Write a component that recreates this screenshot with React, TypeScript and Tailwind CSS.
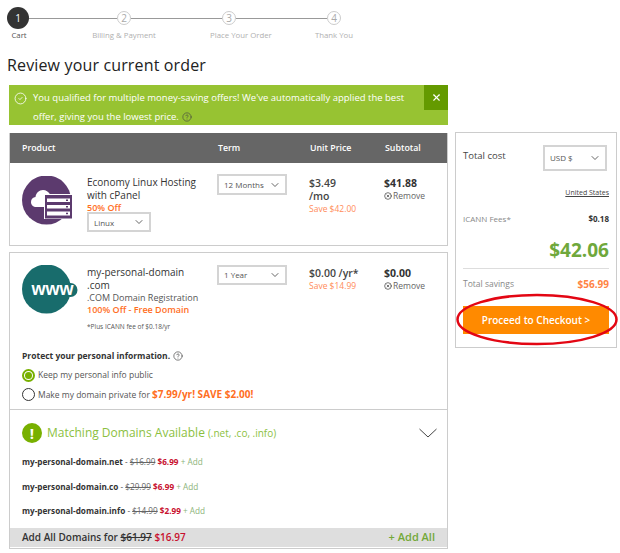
import React from "react";
import { CircleCheck, CircleHelp, ChevronDown, X, CircleX } from "lucide-react";

function Step({ n, active }: { n: string; active?: boolean }) {
  return active ? (
    <div className="w-[22px] h-[22px] rounded-full bg-[#333333] text-white text-[10px] flex items-center justify-center shrink-0">{n}</div>
  ) : (
    <div className="w-[14px] h-[14px] rounded-full border border-[#cccccc] bg-white text-[#aaaaaa] text-[10px] flex items-center justify-center shrink-0">{n}</div>
  );
}

function Line({ w }: { w: string }) {
  return <div className={`h-px bg-[#999999] ${w}`} />;
}

function Select({ label, w, h, cls }: { label: string; w: string; h: string; cls?: string }) {
  return (
    <div className={`border-2 border-[#d4d4d4] bg-white flex items-center justify-between pl-[5px] pr-[4px] text-[8px] text-[#555555] ${w} ${h} ${cls ?? ""}`}>
      <span>{label}</span>
      <ChevronDown size={12} strokeWidth={1.5} className="text-[#333333]" />
    </div>
  );
}

function Remove() {
  return (
    <div className="flex items-center text-[8.500px] text-[#666666] leading-[11px]">
      <CircleX size={8} strokeWidth={2} className="text-[#333333] mr-[1px]" />
      <span>Remove</span>
    </div>
  );
}

function HostingIcon() {
  return (
    <svg width="51" height="49" viewBox="0 0 51 49" className="shrink-0">
      <circle cx="24.500" cy="24" r="24.500" fill="#5c3a6e" />
      <path d="M14 31c-3 0-5-2.300-5-5s2-4.800 4.500-5c0.500-4 3.500-7 7.500-7 3 0 5.500 1.700 6.800 4 3.700 0 6.200 2.500 6.200 5v8z" fill="#ffffff" />
      <rect x="22" y="18" width="28.500" height="25" fill="#ffffff" />
      <rect x="23" y="19" width="27" height="23.500" fill="#5c3a6e" />
      <g fill="#ffffff">
        <rect x="25" y="22.500" width="23" height="3.500" />
        <rect x="25" y="29" width="23" height="3.500" />
        <rect x="25" y="35.500" width="23" height="4" />
      </g>
      <g fill="#5c3a6e">
        <rect x="44" y="23.500" width="2" height="1.500" />
        <rect x="44" y="30" width="2" height="1.500" />
        <rect x="44" y="36.700" width="2" height="1.500" />
      </g>
    </svg>
  );
}

function WwwIcon() {
  return (
    <svg width="56" height="49" viewBox="0 0 56 49" className="shrink-0">
      <circle cx="24.500" cy="24" r="24.500" fill="#186c6c" />
      <circle cx="48.500" cy="25" r="7" fill="#186c6c" />
      <text x="9.500" y="30" fontFamily="'Liberation Sans', sans-serif" fontWeight="700" fontSize="18" fill="#ffffff">www</text>
    </svg>
  );
}

function DomainRow({ name, old, price }: { name: string; old: string; price: string }) {
  return (
    <div className="text-[8.200px] leading-[12px] text-[#555555] h-[24.500px] whitespace-nowrap">
      <span className="font-bold text-[#333333]">{name}</span>
      <span> - </span>
      <span className="line-through text-[#666666]">{old}</span>{" "}
      <span className="font-bold text-[#c8102e]">{price}</span>{" "}
      <span className="text-[#8cb37a]">+ Add</span>
    </div>
  );
}

export default function App() {
  return (
    <div className="relative w-[620px] h-[553px] overflow-hidden bg-white text-[#333333] font-['Open_Sans',sans-serif]">
      {/* stepper */}
      <div className="pl-[7px] pt-[7px] flex items-center h-[29px] box-border">
        <Step n="1" active />
        <Line w="w-[88px]" />
        <Step n="2" />
        <Line w="w-[91px]" />
        <Step n="3" />
        <Line w="w-[91px]" />
        <Step n="4" />
      </div>
      <div className="flex text-[7.800px] leading-[11px] h-[11px] mt-px text-[#b0b0b0] text-center whitespace-nowrap">
        <div className="w-[38px] text-[#555555]">Cart</div>
        <div className="w-[172px]">Billing &amp; Payment</div>
        <div className="w-[38px]">Place Your Order</div>
        <div className="w-[172px]">Thank You</div>
      </div>

      <h1 className="pl-[7px] mt-[13px] text-[16px] leading-[22px] tracking-[0.15px] text-[#222222] font-normal">Review your current order</h1>

      <div className="flex items-start gap-[7px] pl-[9px] mt-[9px]">
        {/* left column */}
        <div className="w-[439px]">
          <div className="relative h-[40px] bg-[#97c332] text-white text-[9.500px] leading-[19px] pl-[24px] pt-[3px] pr-[30px]">
            <CircleCheck size={13} strokeWidth={1.5} className="absolute left-[5px] top-[7px]" />
            <div>You qualified for multiple money-saving offers! We've automatically applied the best</div>
            <div className="flex items-center gap-[3px]">
              <span>offer, giving you the lowest price.</span>
              <CircleHelp size={10} strokeWidth={1.500} className="text-[#444444]" />
            </div>
            <div className="absolute right-0 top-0 w-[24px] h-[25px] bg-[#649a00] flex items-center justify-center">
              <X size={11} strokeWidth={2.500} />
            </div>
          </div>

          {/* product card */}
          <div className="mt-[8px] border border-[#cccccc] border-t-0 h-[113px]">
            <div className="h-[30px] bg-[#666666] text-white text-[8.800px] font-semibold flex items-center pt-px">
              <div className="w-[208px] pl-[12px] shrink-0">Product</div>
              <div className="w-[92px] shrink-0">Term</div>
              <div className="w-[75px] shrink-0">Unit Price</div>
              <div>Subtotal</div>
            </div>
            <div className="flex pl-[12px]">
              <div className="w-[65px] pt-[13px] shrink-0"><HostingIcon /></div>
              <div className="w-[130px] shrink-0 pt-[13px] text-[10px] leading-[13px]">
                <div>Economy Linux Hosting</div>
                <div>with cPanel</div>
                <div className="text-[9px] leading-[11px] font-semibold text-[#ff6f1f]">50% Off</div>
                <Select label="Linux" w="w-[64px]" h="h-[20px]" cls="-mt-px" />
              </div>
              <div className="w-[92px] shrink-0 pt-[11px]">
                <Select label="12 Months" w="w-[70px]" h="h-[21px]" />
              </div>
              <div className="w-[75px] shrink-0 pt-[14px]">
                <div className="text-[10.500px] leading-[13px] font-semibold text-[#444444]">$3.49<br />/mo</div>
                <div className="text-[8.500px] leading-[11px] text-[#ff8c5a]">Save $42.00</div>
              </div>
              <div className="pt-[14px]">
                <div className="text-[10.500px] leading-[13px] font-bold">$41.88</div>
                <Remove />
              </div>
            </div>
          </div>

          {/* domain card */}
          <div className="mt-[6px] border border-[#cccccc] h-[297px]">
            <div className="flex pl-[12px] h-[97px]">
              <div className="w-[65px] pt-[12px] shrink-0"><WwwIcon /></div>
              <div className="w-[130px] shrink-0 pt-[13px]">
                <div className="text-[10px] leading-[13px]">my-personal-domain<br />.com</div>
                <div className="text-[9px] leading-[12px] text-[#555555]">.COM Domain Registration</div>
                <div className="text-[9px] leading-[11px] font-semibold text-[#ff6f1f]">100% Off - Free Domain</div>
                <div className="text-[6.500px] leading-[9px] mt-[7px] text-[#555555]">*Plus ICANN fee of $0.18/yr</div>
              </div>
              <div className="w-[92px] shrink-0 pt-[12px]">
                <Select label="1 Year" w="w-[70px]" h="h-[20px]" />
              </div>
              <div className="w-[75px] shrink-0 pt-[14px]">
                <div className="text-[10.500px] leading-[13px] font-semibold text-[#444444]">$0.00 /yr*</div>
                <div className="text-[8.500px] leading-[11px] text-[#ff8c5a]">Save $14.99</div>
              </div>
              <div className="pt-[14px]">
                <div className="text-[10.500px] leading-[13px] font-bold">$0.00</div>
                <Remove />
              </div>
            </div>

            <div className="pl-[12px] h-[60px] border-b border-[#cccccc]">
              <div className="flex items-center gap-[3px] text-[8.500px] leading-[12px] font-bold">
                <span>Protect your personal information.</span>
                <CircleHelp size={10} strokeWidth={1.500} className="font-normal" />
              </div>
              <div className="flex items-center gap-[3px] mt-[6px] h-[15px] text-[8.500px] text-[#555555]">
                <span className="w-[13px] h-[13px] rounded-full border-2 border-[#78b000] flex items-center justify-center shrink-0">
                  <span className="w-[7px] h-[7px] rounded-full bg-[#78b000]" />
                </span>
                Keep my personal info public
              </div>
              <div className="flex items-center gap-[3px] mt-[4px] h-[15px] text-[8.500px] text-[#555555]">
                <span className="w-[13px] h-[13px] rounded-full border-[1.500px] border-[#333333] shrink-0" />
                <span>Make my domain private for <span className="text-[10px] font-bold text-[#ff6f1f]">$7.99/yr! SAVE $2.00!</span></span>
              </div>
            </div>

            <div className="pl-[12px] pr-[10px] pt-[13px] flex items-center justify-between">
              <div className="flex items-center gap-[5px] text-[#8cbf3f]">
                <span className="w-[20px] h-[20px] rounded-full bg-[#78b000] text-white font-bold text-[15px] flex items-center justify-center">!</span>
                <span className="text-[12px] leading-[20px]">Matching Domains Available</span>
                <span className="text-[10px] leading-[20px] -ml-[2px]">(.net, .co, .info)</span>
              </div>
              <svg width="18" height="10" viewBox="0 0 18 10" fill="none" stroke="#444444" strokeWidth="1"><path d="M0.500 1L9 9L17.500 1" /></svg>
            </div>

            <div className="pl-[12px] mt-[13px] h-[72px]">
              <DomainRow name="my-personal-domain.net" old="$16.99" price="$6.99" />
              <DomainRow name="my-personal-domain.co" old="$29.99" price="$6.99" />
              <DomainRow name="my-personal-domain.info" old="$14.99" price="$2.99" />
            </div>

            <div className="h-[19px] bg-[#dedede] pl-[12px] pr-[12px] flex items-center justify-between text-[10px] font-semibold">
              <div>
                Add All Domains for <span className="line-through">$61.97</span> <span className="text-[#c8102e]">$16.97</span>
              </div>
              <div className="text-[#72a838] text-[11px]">+ Add All</div>
            </div>
          </div>
        </div>

        {/* summary */}
        <div className="w-[162px] h-[216px] mt-[47px] border border-[#cccccc] px-[7px] shrink-0">
          <div className="flex items-start justify-between pt-[12px] pr-[1px]">
            <span className="text-[9.500px] leading-[12px] pt-[5px] text-[#444444]">Total cost</span>
            <Select label="USD $" w="w-[64px]" h="h-[26px]" cls="mr-[1px]" />
          </div>
          <div className="text-right text-[7px] leading-[10px] underline mt-[17px] text-[#444444]">United States</div>
          <div className="flex justify-between mt-[15px] text-[8px] leading-[11px]">
            <span className="text-[#888888]">ICANN Fees*</span>
            <span className="font-bold">$0.18</span>
          </div>
          <div className="text-right text-[19px] leading-[24px] font-bold text-[#6fa83c] mt-[14px]">$42.06</div>
          <div className="border-t border-[#dddddd] mt-[6px] pt-[8px] flex justify-between items-center h-[24px]">
            <span className="text-[8.500px] text-[#888888]">Total savings</span>
            <span className="text-[10px] font-bold text-[#ff8444]">$56.99</span>
          </div>
          <div className="mt-[14px] pt-px h-[28px] w-[146px] bg-[#ff8a00] text-white text-[10px] font-semibold flex items-center justify-center">Proceed to Checkout &gt;</div>
        </div>
      </div>

      <svg className="absolute left-[455px] top-[293px]" width="164" height="53" viewBox="0 0 164 53" fill="none">
        <ellipse cx="82" cy="26.500" rx="79.500" ry="24.500" stroke="#e30613" strokeWidth="2.500" />
      </svg>
    </div>
  );
}
